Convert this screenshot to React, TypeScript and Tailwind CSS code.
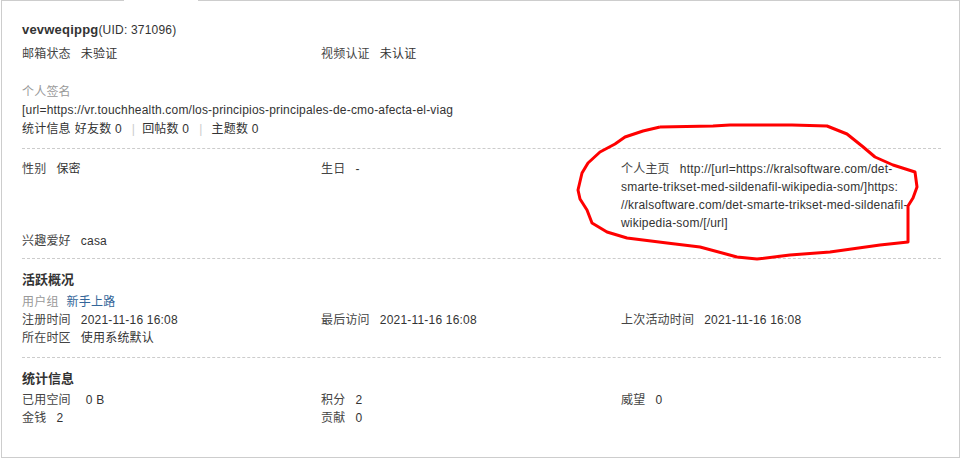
import type { ReactNode } from 'react'

const font = 'font-["Liberation_Sans","Noto_Sans_CJK_SC",sans-serif]'

interface FieldProps {
  label: string
  children?: ReactNode
  muted?: boolean
}

// label + value pair, the way the profile rows are laid out
function Field({ label, children, muted }: FieldProps) {
  return (
    <div className="leading-[18px] whitespace-nowrap">
      <span className={muted ? 'mr-[8px] text-[#999]' : 'mr-[10px] text-[#444]'}>{label}</span>
      <span className="text-[#333]">{children}</span>
    </div>
  )
}

function Row({ children }: { children: ReactNode }) {
  return <div className="grid grid-cols-[299px_300px_1fr]">{children}</div>
}

function Sep() {
  return <span className="ml-[10px] mr-[7px] text-[#ccc]">|</span>
}

// hand-drawn red ring around the homepage entry
const ring = [
  [660, 127], [713, 126], [730, 125], [792, 125], [827, 126], [847, 134], [862, 146],
  [875, 157], [893, 165], [915, 172], [917, 187], [913, 198], [908, 206], [908, 242],
  [880, 245], [830, 252], [790, 255], [757, 259], [737, 257], [700, 247], [667, 243],
  [627, 238], [607, 232], [592, 223], [587, 210], [580, 199], [578, 190], [582, 173],
  [588, 163], [600, 152], [615, 144], [625, 137], [643, 131], [660, 127],
]

export default function App() {
  return (
    <div className={`relative w-[961px] h-[463px] bg-white text-[12px] tracking-[0.2px] text-[#333] ${font}`}>
      <div className="ml-[1px] w-[959px] border-x border-b border-[#cdcdcd]">
        {/* top edge, open under the active tab */}
        <div className="flex">
          <div className="w-[122px] h-px bg-[#cdcdcd]" />
          <div className="w-[74px]" />
          <div className="flex-1 h-px bg-[#cdcdcd]" />
        </div>

        <div className="pl-[20px] pr-[18px] pt-[20px] pb-[30px]">
          {/* profile */}
          <div className="pb-[10px] border-b border-dashed border-[#ccc]">
            <div className="leading-[18px]">
              <strong className="text-[13px] font-bold text-[#333]">vevweqippg</strong>
              <span className="text-[#333]">(UID: 371096)</span>
            </div>
            <div className="mt-[6px]">
              <Row>
                <Field label="邮箱状态">未验证</Field>
                <Field label="视频认证">未认证</Field>
              </Row>
            </div>
            <div className="mt-[20px] leading-[18px] text-[#999]">个人签名</div>
            <div className="leading-[18px] text-[#333] whitespace-nowrap">
              [url=https://vr.touchhealth.com/los-principios-principales-de-cmo-afecta-el-viag
            </div>
            <div className="mt-[1px] leading-[18px] text-[#333] whitespace-nowrap">
              <span className="mr-[4px]">统计信息</span>
              好友数 0<Sep />回帖数 0<Sep />
              <span className="ml-[2px]">主题数 0</span>
            </div>
          </div>

          {/* personal details */}
          <div className="pt-[11px] pb-[8px] border-b border-dashed border-[#ccc]">
            <Row>
              <Field label="性别">保密</Field>
              <Field label="生日">-</Field>
              <div className="leading-[18px] text-[#333] whitespace-nowrap">
                <span className="mr-[10px] text-[#444]">个人主页</span>
                http://[url=https://kralsoftware.com/det-
                <br />
                smarte-trikset-med-sildenafil-wikipedia-som/]https:
                <br />
                //kralsoftware.com/det-smarte-trikset-med-sildenafil-
                <br />
                wikipedia-som/[/url]
              </div>
            </Row>
            <Field label="兴趣爱好">casa</Field>
          </div>

          {/* activity */}
          <div className="pt-[12px] pb-[10px] border-b border-dashed border-[#ccc]">
            <h2 className="text-[13px] font-bold leading-[18px] tracking-normal text-[#333]">活跃概况</h2>
            <div className="mt-[4px]">
              <Field label="用户组" muted>
                <span className="text-[#336699]">新手上路</span>
              </Field>
              <Row>
                <Field label="注册时间">2021-11-16 16:08</Field>
                <Field label="最后访问">2021-11-16 16:08</Field>
                <Field label="上次活动时间">2021-11-16 16:08</Field>
              </Row>
              <Field label="所在时区">使用系统默认</Field>
            </div>
          </div>

          {/* statistics */}
          <div className="pt-[12px]">
            <h2 className="text-[13px] font-bold leading-[18px] tracking-normal text-[#333]">统计信息</h2>
            <div className="mt-[3px]">
              <Row>
                <Field label="已用空间">
                  <span className="ml-[5px]">0 B</span>
                </Field>
                <Field label="积分">2</Field>
                <Field label="威望">0</Field>
                <Field label="金钱">2</Field>
                <Field label="贡献">0</Field>
              </Row>
            </div>
          </div>
        </div>
      </div>

      <svg className="absolute left-0 top-0 pointer-events-none" width="961" height="463">
        <polyline
          points={ring.map(([x, y]) => `${x},${y}`).join(' ')}
          fill="none"
          stroke="#ff0000"
          strokeWidth="3"
          strokeLinejoin="round"
        />
      </svg>
    </div>
  )
}
